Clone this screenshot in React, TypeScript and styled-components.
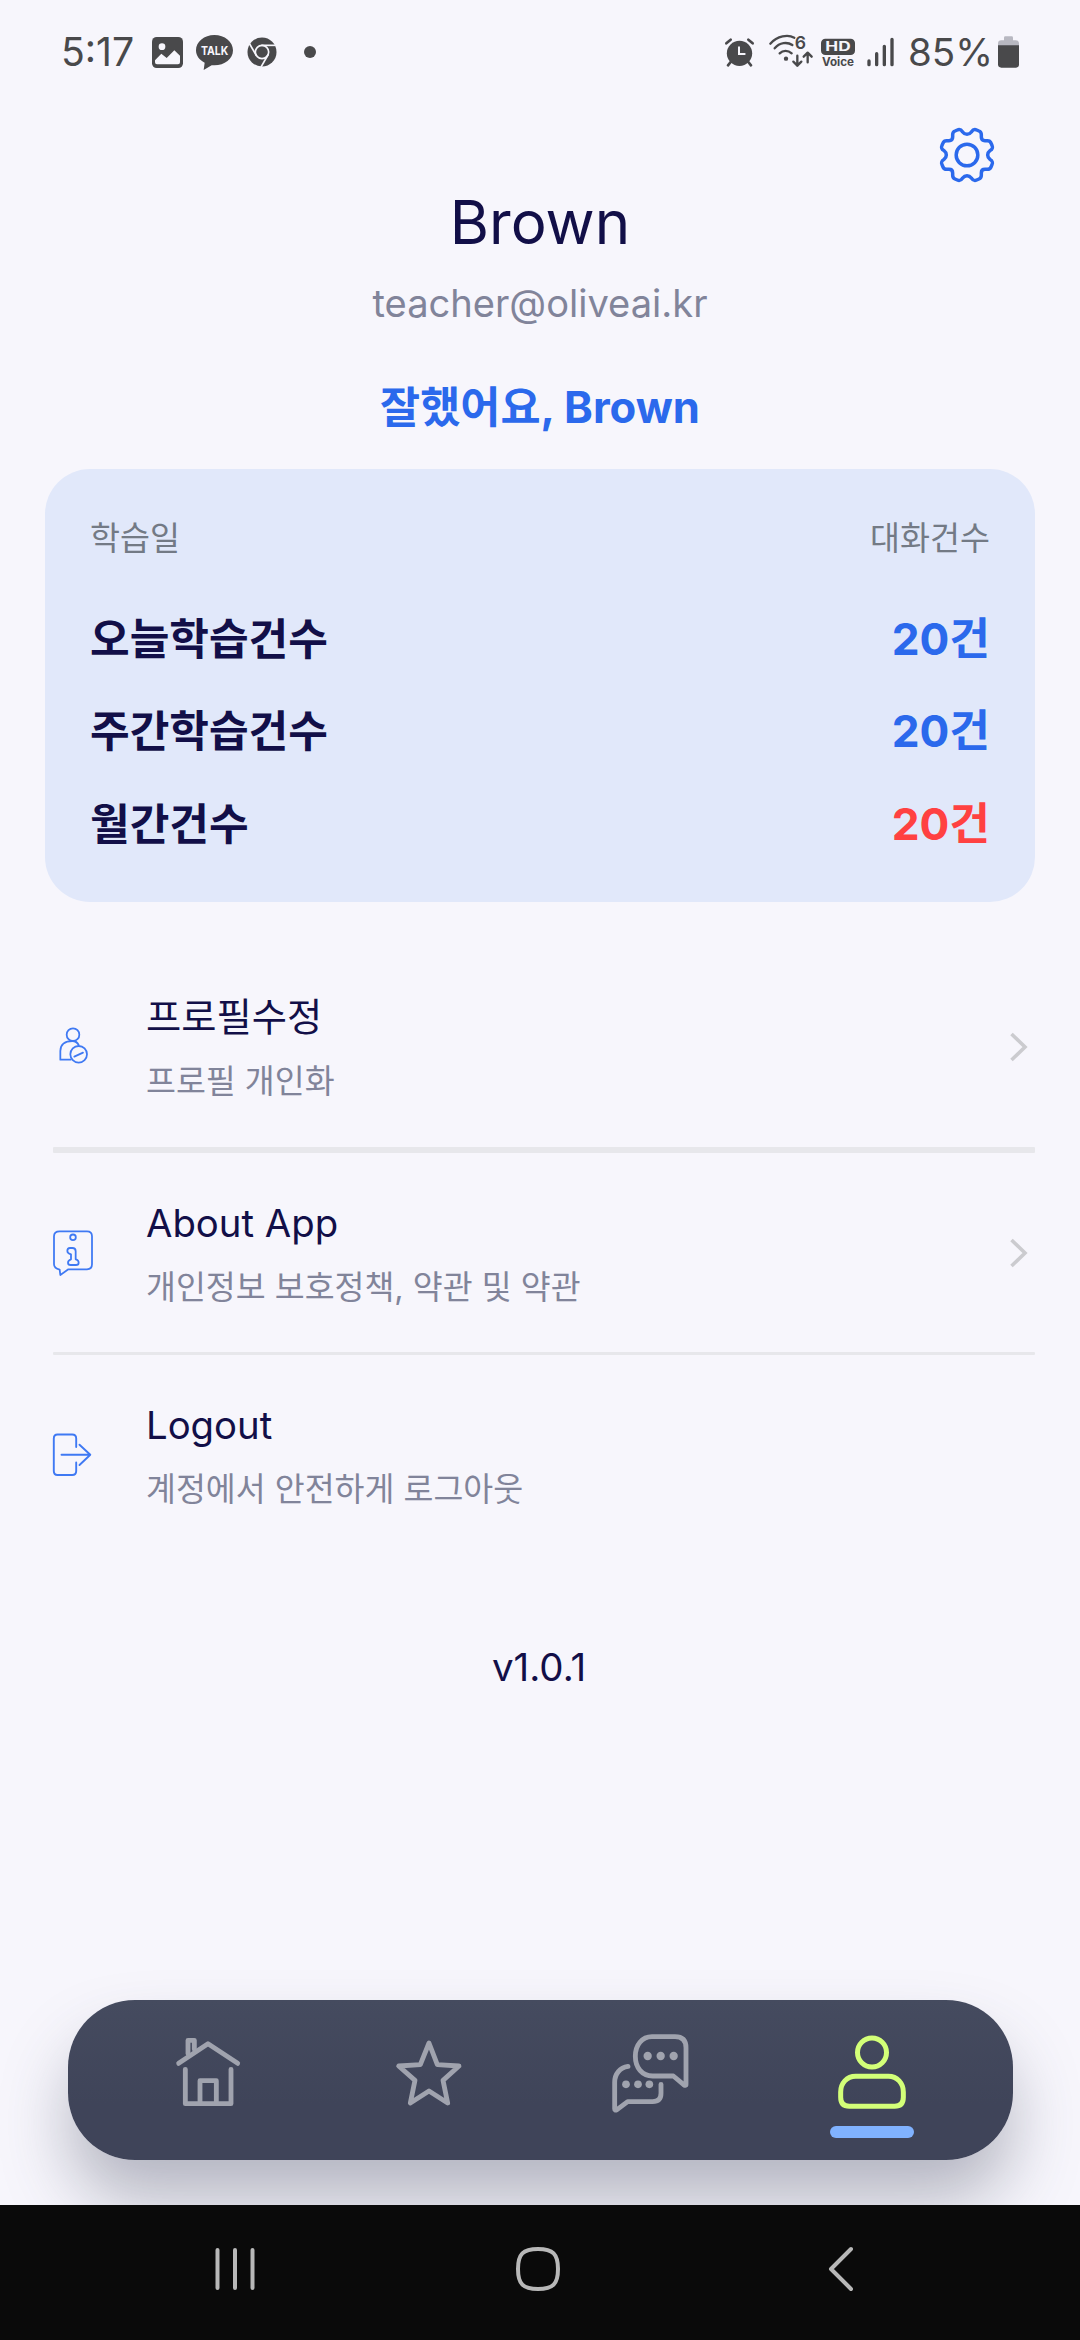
import React from 'react';
import styled, { createGlobalStyle } from 'styled-components';

const GlobalStyle = createGlobalStyle`
  *, *::before, *::after { box-sizing: border-box; }
  body {
    margin: 0;
    background: #f7f6fc;
    font-family: Inter, "Noto Sans CJK KR", sans-serif;
  }
  svg { display: block; flex: none; overflow: visible; }
`;

const navy = '#120f48';
const blue = '#2b69ec';
const red = '#ff4141';
const muted = '#81849a';
const statusInk = '#49494b';

const Screen = styled.div`
  display: flex;
  flex-direction: column;
  width: 1080px;
  height: 2340px;
  overflow: hidden;
  background: #f7f6fc;
`;

/* ---------- status bar ---------- */

const StatusBar = styled.header`
  display: flex;
  justify-content: space-between;
  height: 104px;
  padding: 0 61px;
  color: ${statusInk};
`;

const StatusGroup = styled.div`
  display: flex;
  align-items: center;
`;

const StatusText = styled.span<{ $size: number; $gap?: number }>`
  margin-left: ${({ $gap = 0 }) => $gap}px;
  font-size: ${({ $size }) => $size}px;
  line-height: 48px;
  white-space: nowrap;
`;

const StatusIcon = styled.svg<{ $gap: number }>`
  margin-left: ${({ $gap }) => $gap}px;
`;

/* ---------- profile heading ---------- */

const SettingsRow = styled.div`
  display: flex;
  justify-content: flex-end;
  align-items: flex-end;
  height: 79px;
  padding-right: 85px;
`;

const Name = styled.h1`
  margin: 0;
  font-size: 60px;
  font-weight: 400;
  line-height: 78px;
  text-align: center;
  color: ${navy};
`;

const Email = styled.p`
  margin: 0;
  font-size: 38.1px;
  line-height: 85px;
  text-align: center;
  color: ${muted};
`;

const Greeting = styled.h2`
  margin: 0;
  font-size: 43.6px;
  font-weight: 700;
  line-height: 123px;
  text-align: center;
  color: ${blue};
`;

/* ---------- statistics card ---------- */

const StatsCard = styled.section`
  flex: none;
  height: 433px;
  margin: 0 45px;
  padding: 39px 45px 0;
  border-radius: 45px;
  background: #e1e8fa;
`;

const StatsHead = styled.div`
  display: flex;
  justify-content: space-between;
  margin-bottom: 25px;
  font-size: 32.6px;
  line-height: 60px;
  color: #737a85;
`;

const StatsRow = styled.div`
  display: flex;
  justify-content: space-between;
  font-weight: 700;
  line-height: 92.4px;
`;

const StatsLabel = styled.span`
  font-size: 43.1px;
  color: ${navy};
`;

const StatsValue = styled.span<{ $color: string }>`
  font-size: 44.2px;
  color: ${({ $color }) => $color};
`;

/* ---------- menu ---------- */

const Menu = styled.nav`
  display: flex;
  flex-direction: column;
  margin: 45px 45px 0 53px;
`;

const MenuItem = styled.div<{ $height?: number }>`
  display: flex;
  align-items: center;
  height: ${({ $height = 200 }) => $height}px;
`;

const MenuIcon = styled.span<{ $lift?: number }>`
  display: flex;
  justify-content: center;
  flex: none;
  width: 40px;
  padding-bottom: ${({ $lift = 0 }) => $lift * 2}px;
`;

const MenuText = styled.div`
  flex: 1;
  margin: 5px 0 0 53px;
  white-space: nowrap;
`;

const MenuTitle = styled.div`
  font-size: 38.3px;
  line-height: 64px;
  color: ${navy};
`;

const MenuCaption = styled.div`
  font-size: 32.5px;
  line-height: 65px;
  color: ${muted};
`;

const Divider = styled.hr<{ $size: number }>`
  width: 100%;
  height: ${({ $size }) => $size}px;
  margin: 0;
  border: 0;
  border-radius: 1px;
  background: #e7e7eb;
`;

const Version = styled.p`
  margin: 82px 0 0;
  padding-right: 2px;
  font-size: 38.5px;
  line-height: 60px;
  text-align: center;
  color: ${navy};
`;

/* ---------- floating tab bar ---------- */

const TabBar = styled.nav`
  display: grid;
  grid-template-columns: repeat(4, 1fr);
  flex: none;
  height: 160px;
  margin: auto 67.5px 45px;
  padding: 0 30px;
  border-radius: 67px;
  background: linear-gradient(#454b5f, #3f4459 65%, #3f4459);
  box-shadow: 0 42px 68px -3px rgba(63, 68, 89, 0.37);
`;

const Tab = styled.div<{ $top: number }>`
  display: flex;
  flex-direction: column;
  align-items: center;
  padding-top: ${({ $top }) => $top}px;
`;

const ActiveMark = styled.span`
  width: 84px;
  height: 12px;
  margin-top: 16px;
  border-radius: 6px;
  background: #80b2ff;
`;

/* ---------- system navigation ---------- */

const SystemBar = styled.footer`
  position: relative;
  display: flex;
  justify-content: space-between;
  align-items: flex-start;
  flex: none;
  height: 135px;
  padding: 39px 214px 0 210px;
  background: #0a0a0a;
`;

const stroke = (color: string, width: number) => ({
  fill: 'none',
  stroke: color,
  strokeWidth: width,
  strokeLinecap: 'round' as const,
  strokeLinejoin: 'round' as const,
});

const PictureIcon = () => (
  <StatusIcon $gap={18} width="31" height="31" viewBox="0 0 93 93">
    <rect width="93" height="93" rx="14" fill={statusInk} />
    <circle cx="30" cy="29" r="10" fill="#f7f6fc" />
    <path d="M9 70 L28 50 L44 63 L67 40 L84 56 V76 Q84 82 78 82 H15 Q9 82 9 76Z" fill="#f7f6fc" />
  </StatusIcon>
);

const TalkIcon = () => (
  <StatusIcon $gap={13} width="37" height="35" viewBox="0 0 111 105">
    <path
      d="M55 0 C86 0 111 20 111 46 C111 72 86 91 55 91 L47 90.500 L23 105 L26 83 C10 75 0 62 0 46 C0 20 25 0 55 0Z"
      fill={statusInk}
    />
    <text x="56" y="60" fontSize="37" fontWeight="700" textAnchor="middle" textLength="82" lengthAdjust="spacingAndGlyphs" fill="#f7f6fc">
      TALK
    </text>
  </StatusIcon>
);

const BrowserIcon = () => (
  <StatusIcon $gap={14} width="30" height="30" viewBox="-45 -45 90 90">
    <circle r="43.500" fill={statusInk} />
    <circle r="20" fill="none" stroke="#f7f6fc" strokeWidth="5" />
    {[0, 120, 240].map((angle) => (
      <path key={angle} d="M-2 -20 H41" transform={`rotate(${angle})`} stroke="#f7f6fc" strokeWidth="5" />
    ))}
  </StatusIcon>
);

const MoreDot = () => (
  <StatusIcon $gap={27} width="12" height="12" viewBox="0 0 12 12">
    <circle cx="6" cy="6" r="6" fill={statusInk} />
  </StatusIcon>
);

const AlarmIcon = () => (
  <StatusIcon $gap={0} width="29" height="29" viewBox="0 0 87 87">
    <circle cx="43.500" cy="46" r="38" fill={statusInk} />
    <path d="M4 16 L17 5 M83 16 L70 5 M17 72 L9 82 M70 72 L78 82" {...stroke(statusInk, 8)} />
    <path d="M42 28 V48 H59" fill="none" stroke="#f7f6fc" strokeWidth="6" strokeLinecap="round" />
  </StatusIcon>
);

const WifiIcon = () => (
  <StatusIcon $gap={15} width="45" height="34" viewBox="0 0 135 102">
    <path d="M4 26 C25 2 57 -2 76 8 M17 40 C32 22 55 20 70 30 M32 55 C42 45 57 45 68 55" {...stroke(statusInk, 7)} />
    <circle cx="51" cy="71" r="6.500" fill={statusInk} />
    <text x="94" y="41" fontSize="53" fontWeight="600" textAnchor="middle" fill={statusInk}>6</text>
    <path d="M85 62 V92 M73 80 L85 92 L97 80 M116 82 V54 M104 65 L116 53 L128 65" {...stroke(statusInk, 7)} />
  </StatusIcon>
);

const HdVoiceIcon = () => (
  <StatusIcon $gap={7} width="34" height="30" viewBox="0 0 102 90">
    <rect y="5" width="102" height="49" rx="13" fill={statusInk} />
    <text x="51" y="43" fontSize="38" fontWeight="700" textAnchor="middle" textLength="76" lengthAdjust="spacingAndGlyphs" fill="#f7f6fc">
      HD
    </text>
    <text x="51" y="88" fontSize="35" fontWeight="700" textAnchor="middle" textLength="96" lengthAdjust="spacingAndGlyphs" fill={statusInk}>
      Voice
    </text>
  </StatusIcon>
);

const SignalIcon = () => (
  <StatusIcon $gap={12} width="27" height="30" viewBox="0 0 81 90">
    <path d="M6 72 V83 M29 50 V83 M52 28 V83 M75 7 V83" {...stroke(statusInk, 10)} />
  </StatusIcon>
);

const BatteryIcon = () => (
  <StatusIcon $gap={5} width="21" height="32" viewBox="0 0 63 96">
    <path d="M18 5 Q18 1 22 1 H41 Q45 1 45 5 V13 H53 Q63 13 63 23 V32 H0 V23 Q0 13 10 13 H18Z" fill="#b8b8c1" />
    <path d="M0 28 H63 V85 Q63 95 53 95 H10 Q0 95 0 85Z" fill={statusInk} />
  </StatusIcon>
);

const GearIcon = () => (
  <svg width="56" height="56" viewBox="-84 -84 168 168">
    <path
      d="M0 -62 C6 -62 10 -65 13 -69 C19 -78 22 -78 29 -75 L36 -72 C41 -70 43 -67 43 -61 V-54 C43 -46 46 -43 54 -43 H61 C67 -43 70 -41 72 -36 L75 -29 C78 -22 78 -19 69 -13 C65 -10 62 -6 62 0
         C62 6 65 10 69 13 C78 19 78 22 75 29 L72 36 C70 41 67 43 61 43 H54 C46 43 43 46 43 54 V61 C43 67 41 70 36 72 L29 75 C22 78 19 78 13 69 C10 65 6 62 0 62
         C-6 62 -10 65 -13 69 C-19 78 -22 78 -29 75 L-36 72 C-41 70 -43 67 -43 61 V54 C-43 46 -46 43 -54 43 H-61 C-67 43 -70 41 -72 36 L-75 29 C-78 22 -78 19 -69 13 C-65 10 -62 6 -62 0
         C-62 -6 -65 -10 -69 -13 C-78 -19 -78 -22 -75 -29 L-72 -36 C-70 -41 -67 -43 -61 -43 H-54 C-46 -43 -43 -46 -43 -54 V-61 C-43 -67 -41 -70 -36 -72 L-29 -75 C-22 -78 -19 -78 -13 -69 C-10 -65 -6 -62 0 -62Z"
      {...stroke(blue, 10.5)}
    />
    <circle r="32.500" {...stroke(blue, 10.5)} />
  </svg>
);

const ProfileIcon = () => (
  <svg width="30" height="37" viewBox="0 0 90 111">
    <g {...stroke('#3f79f3', 5.3)}>
      <circle cx="45" cy="23" r="19" />
      <path d="M38 98 H7 V72 C7 52 22 42 43 42 C52 42 59 48 62 54" />
      <circle cx="62" cy="82" r="25" />
      <path d="M49 89 L75 77" />
    </g>
  </svg>
);

const AboutIcon = () => (
  <svg width="40" height="46" viewBox="0 0 120 138">
    <g {...stroke('#3f79f3', 5.3)}>
      <path d="M20 4 H102 Q117 4 117 19 V103 Q117 118 102 118 H46 L22 135 L20 119 Q3 115 3 103 V19 Q3 4 20 4Z" />
      <circle cx="60" cy="22" r="8.500" />
      <path d="M51 54 H58 Q68 54 68 64 V88 Q77 90 77 98 Q77 105 69 105 H53 Q45 105 45 98 Q45 91 54 88 V73 Q43 70 43 63 Q43 54 51 54Z" />
    </g>
  </svg>
);

const LogoutIcon = () => (
  <svg width="40" height="44" viewBox="0 0 40 44">
    <g {...stroke('#3f79f3', 1.9)}>
      <path d="M23.200 14 V5.500 Q23.200 1.500 19.200 1.500 H4.500 Q0.800 1.500 0.800 5.500 V38 Q0.800 42 4.500 42 H19.200 Q23.200 42 23.200 38 V29.500" />
      <path d="M8.500 21.700 H37 M26.500 11.700 L37.300 21.700 L26.500 32" />
    </g>
  </svg>
);

const Chevron = () => (
  <svg width="30" height="30" viewBox="0 0 30 30">
    <path d="M6.500 2 L20 15 L6.500 28" fill="none" stroke="#cbcbcf" strokeWidth="3.600" />
  </svg>
);

const tabGrey = '#a0a3ae';

const HomeIcon = () => (
  <svg width="64" height="68" viewBox="0 0 192 204">
    <g {...stroke(tabGrey, 14.5)}>
      <path d="M36 47 V7 H55 V34" />
      <path d="M8 76 L96 17 L185 76" />
      <path d="M28 94 V197 H165 V94" />
      <path d="M72 197 V128 H121 V197" />
    </g>
  </svg>
);

const StarIcon = () => (
  <svg width="66" height="66" viewBox="0 0 198 198">
    <path d="M99 9 L124 74 L189 78 L141 121 L155 189 L99 153 L43 189 L57 121 L8 78 L73 74Z" {...stroke(tabGrey, 14.5)} />
  </svg>
);

const ChatIcon = () => (
  <svg width="77" height="79" viewBox="0 0 231 237">
    <g {...stroke(tabGrey, 14.5)}>
      <path d="M120 8 H189 Q222 8 222 41 V151 Q222 157 215 152 L184 126 H122 C90 126 70 101 70 67 C70 33 90 8 120 8Z" />
      <path d="M48 97 C24 101 8 119 8 145 V225 Q8 231 15 227 L47 203 H122 Q147 203 147 178 V151" />
    </g>
    <g fill={tabGrey}>
      <circle cx="107" cy="66" r="12.500" />
      <circle cx="146" cy="66" r="12.500" />
      <circle cx="185" cy="66" r="12.500" />
      <circle cx="42" cy="151" r="11.500" />
      <circle cx="78" cy="151" r="11.500" />
      <circle cx="112" cy="151" r="11.500" />
    </g>
  </svg>
);

const PersonIcon = () => (
  <svg width="70" height="75" viewBox="0 0 210 225">
    <g {...stroke('#d3ff78', 15)}>
      <circle cx="105" cy="52.500" r="43.500" />
      <path d="M56 124 H154 C181 124 199 145 199 171 V187 Q199 214 173 214 H37 Q11 214 11 187 V171 C11 145 29 124 56 124Z" />
    </g>
  </svg>
);

const sysGrey = '#b8b8b8';

const RecentsIcon = () => (
  <svg width="50" height="50" viewBox="0 0 50 50">
    <path d="M7.500 6 V44 M25 6 V44 M42.500 6 V44" {...stroke(sysGrey, 4)} />
  </svg>
);

const HomeKeyIcon = () => (
  <svg width="50" height="50" viewBox="0 0 50 50">
    <path d="M25 5 C40 5 45 10 45 25 C45 40 40 45 25 45 C10 45 5 40 5 25 C5 10 10 5 25 5Z" {...stroke(sysGrey, 4)} />
  </svg>
);

const BackIcon = () => (
  <svg width="50" height="50" viewBox="0 0 50 50">
    <path d="M35 5 L15 25 L35 45" {...stroke(sysGrey, 4)} />
  </svg>
);

const stats = [
  { label: '오늘학습건수', value: '20건', color: blue },
  { label: '주간학습건수', value: '20건', color: blue },
  { label: '월간건수', value: '20건', color: red },
];

export default function App() {
  return (
    <Screen>
      <GlobalStyle />
      <StatusBar>
        <StatusGroup>
          <StatusText $size={39.2}>5:17</StatusText>
          <PictureIcon />
          <TalkIcon />
          <BrowserIcon />
          <MoreDot />
        </StatusGroup>
        <StatusGroup>
          <AlarmIcon />
          <WifiIcon />
          <HdVoiceIcon />
          <SignalIcon />
          <StatusText $size={38.5} $gap={14}>85%</StatusText>
          <BatteryIcon />
        </StatusGroup>
      </StatusBar>

      <SettingsRow>
        <GearIcon />
      </SettingsRow>
      <Name>Brown</Name>
      <Email>teacher@oliveai.kr</Email>
      <Greeting>잘했어요, Brown</Greeting>

      <StatsCard>
        <StatsHead>
          <span>학습일</span>
          <span>대화건수</span>
        </StatsHead>
        {stats.map(({ label, value, color }) => (
          <StatsRow key={label}>
            <StatsLabel>{label}</StatsLabel>
            <StatsValue $color={color}>{value}</StatsValue>
          </StatsRow>
        ))}
      </StatsCard>

      <Menu>
        <MenuItem>
          <MenuIcon $lift={2}><ProfileIcon /></MenuIcon>
          <MenuText>
            <MenuTitle>프로필수정</MenuTitle>
            <MenuCaption>프로필 개인화</MenuCaption>
          </MenuText>
          <Chevron />
        </MenuItem>
        <Divider $size={6} />
        <MenuItem $height={199}>
          <MenuIcon><AboutIcon /></MenuIcon>
          <MenuText>
            <MenuTitle>About App</MenuTitle>
            <MenuCaption>개인정보 보호정책, 약관 및 약관</MenuCaption>
          </MenuText>
          <Chevron />
        </MenuItem>
        <Divider $size={3} />
        <MenuItem>
          <MenuIcon><LogoutIcon /></MenuIcon>
          <MenuText>
            <MenuTitle>Logout</MenuTitle>
            <MenuCaption>계정에서 안전하게 로그아웃</MenuCaption>
          </MenuText>
        </MenuItem>
      </Menu>

      <Version>v1.0.1</Version>

      <TabBar>
        <Tab $top={38}><HomeIcon /></Tab>
        <Tab $top={40}><StarIcon /></Tab>
        <Tab $top={34}><ChatIcon /></Tab>
        <Tab $top={35}>
          <PersonIcon />
          <ActiveMark />
        </Tab>
      </TabBar>

      <SystemBar>
        <RecentsIcon />
        <HomeKeyIcon />
        <BackIcon />
      </SystemBar>
    </Screen>
  );
}
